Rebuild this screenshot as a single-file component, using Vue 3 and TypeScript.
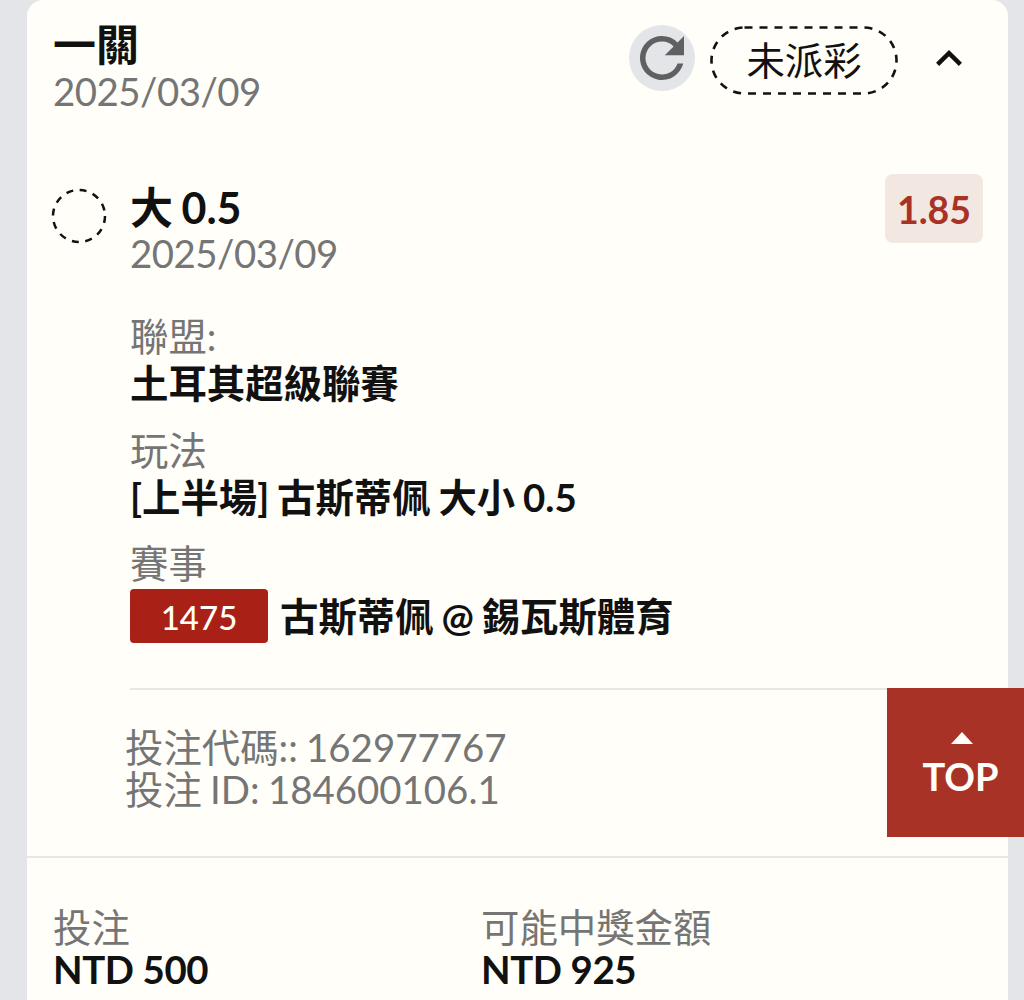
<script setup lang="ts">
interface InfoRow {
  label: string;
  value: string;
}

const rows: InfoRow[] = [
  { label: '聯盟:', value: '土耳其超級聯賽' },
  { label: '玩法', value: '[上半場] 古斯蒂佩 大小 0.5' },
];
</script>

<template>
  <div class="page">
    <div class="card">
      <div class="head">
        <div class="head-title">
          <div class="title">一關</div>
          <div class="date">2025/03/09</div>
        </div>
        <div class="head-actions">
          <div class="refresh">
            <svg width="66" height="66" viewBox="0 0 24 24" fill="#5f6062">
              <path d="M17.65 6.35A7.96 7.96 0 0 0 12 4a8 8 0 1 0 7.73 10h-2.08A6 6 0 1 1 12 6c1.66 0 3.14.69 4.22 1.78L13 11h7V4l-2.35 2.35z" />
            </svg>
          </div>
          <div class="status">
            <svg class="status-border" width="188" height="69" viewBox="0 0 188 69" fill="none" stroke="#111" stroke-width="2.6" stroke-dasharray="8 7">
              <rect x="1.5" y="1.5" width="185" height="66" rx="33" />
            </svg>
            未派彩
          </div>
          <svg class="chevron" width="26" height="16" viewBox="0 0 26 16" fill="none" stroke="#111" stroke-width="4.4">
            <path d="M1.6 14.4 13 3.2l11.4 11.2" />
          </svg>
        </div>
      </div>

      <div class="bet">
        <svg class="dot" width="56" height="56" viewBox="0 0 56 56" fill="none" stroke="#111" stroke-width="2.5" stroke-dasharray="7 6.6">
          <circle cx="28" cy="28" r="26" />
        </svg>
        <div class="bet-main">
          <div class="bet-top">
            <div>
              <div class="pick">大 0.5</div>
              <div class="date date-sub">2025/03/09</div>
            </div>
            <div class="odds">1.85</div>
          </div>
          <div class="details">
            <div v-for="row in rows" :key="row.label" class="row">
              <div class="label">{{ row.label }}</div>
              <div class="value">{{ row.value }}</div>
            </div>
            <div class="row">
              <div class="label">賽事</div>
              <div class="match">
                <span class="code">1475</span>
                <span class="value">古斯蒂佩 @ 錫瓦斯體育</span>
              </div>
            </div>
          </div>
        </div>
      </div>

      <div class="ids">
        <div>投注代碼:: 162977767</div>
        <div>投注 ID: 184600106.1</div>
      </div>

      <div class="totals">
        <div class="total">
          <div class="label">投注</div>
          <div class="amount">NTD 500</div>
        </div>
        <div class="total">
          <div class="label">可能中獎金額</div>
          <div class="amount">NTD 925</div>
        </div>
      </div>
    </div>

    <div class="top-btn">
      <svg width="22" height="12" viewBox="0 0 22 12" fill="#fffef8">
        <path d="M11 0 22 12H0z" />
      </svg>
      <span>TOP</span>
    </div>
  </div>
</template>

<style scoped>
.page {
  position: relative;
  height: 1000px;
  overflow: hidden;
  padding: 0 16px 0 27px;
  background: #e3e5e8;
  font-family: Lato, "Noto Sans CJK TC", sans-serif;
  color: #111;
}

.card {
  height: 1000px;
  background: #fffef8;
  border-radius: 16px 16px 0 0;
}

.head {
  display: flex;
  justify-content: space-between;
  padding: 22px 46px 0 26px;
}

.title {
  font-size: 43px;
  line-height: 46px;
  font-weight: 700;
}

.date {
  font-size: 38.4px;
  line-height: 46px;
  letter-spacing: -0.5px;
  color: #757575;
}

.date-sub {
  line-height: 44px;
}

.head-actions {
  display: flex;
  align-items: flex-start;
}

.refresh {
  width: 66px;
  height: 66px;
  margin-top: 3px;
  border-radius: 50%;
  background: #e3e5e8;
}

.refresh svg {
  display: block;
}

.status {
  position: relative;
  width: 188px;
  height: 69px;
  margin: 4px 0 0 15px;
  font-size: 38.4px;
  line-height: 69px;
  text-align: center;
}

.status-border {
  position: absolute;
  top: 0;
  left: 0;
}

.chevron {
  margin: 28px 0 0 38px;
}

.bet {
  display: flex;
  padding: 60px 25px 0 24px;
}

.dot {
  flex: none;
  margin-top: 14px;
}

.bet-main {
  flex: 1;
  margin-left: 23px;
}

.bet-top {
  display: flex;
  justify-content: space-between;
}

.pick {
  font-size: 43px;
  line-height: 46px;
  font-weight: 700;
  word-spacing: -2px;
  margin-top: 11px;
}

.odds {
  width: 98px;
  height: 69px;
  border-radius: 8px;
  background: #f3e7e1;
  color: #a93226;
  font-size: 37.5px;
  font-weight: 700;
  line-height: 72px;
  text-align: center;
}

.details {
  margin-top: 38px;
  margin-right: -25px;
  padding-bottom: 45px;
  border-bottom: 2px solid #e8e8e3;
}

.row {
  margin-bottom: 19.5px;
}

.row:last-child {
  margin-bottom: 0;
}

.label {
  font-size: 38.4px;
  line-height: 47px;
  color: #757575;
}

.value {
  font-size: 38.4px;
  line-height: 47px;
  font-weight: 700;
  word-spacing: -1.5px;
}

.match {
  display: flex;
  align-items: center;
  gap: 12px;
  margin-top: 2px;
}

.code {
  width: 138px;
  height: 54px;
  border-radius: 4px;
  background: #a92116;
  color: #fffef8;
  font-size: 33px;
  font-weight: 500;
  line-height: 56px;
  text-align: center;
}

.ids {
  padding: 36px 0 46px 98px;
  font-size: 38.4px;
  line-height: 42px;
  word-spacing: -1.5px;
  color: #757575;
  border-bottom: 2px solid #e8e8e3;
}

.totals {
  display: flex;
  padding: 48px 26px 0;
}

.total {
  width: 428px;
}

.total .label {
  line-height: 42px;
}

.amount {
  font-size: 38.4px;
  line-height: 42px;
  letter-spacing: -0.4px;
  font-weight: 700;
}

.top-btn {
  position: absolute;
  top: 688px;
  right: 0;
  display: flex;
  flex-direction: column;
  align-items: center;
  box-sizing: border-box;
  width: 137px;
  height: 149px;
  padding: 44px 0 0 12px;
  background: #a93226;
  color: #fffef8;
  font-size: 38px;
  font-weight: 700;
  line-height: 42px;
}

.top-btn svg {
  display: block;
  margin-bottom: 11px;
}

.top-btn span {
  margin-right: 2px;
}
</style>
